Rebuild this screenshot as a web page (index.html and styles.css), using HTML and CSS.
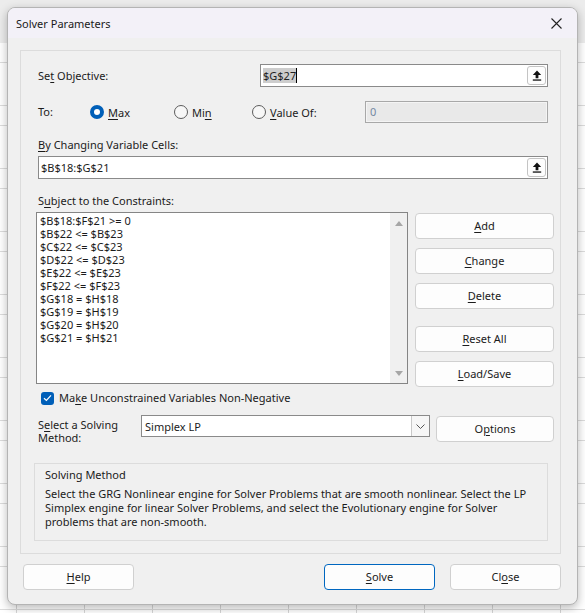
FILE: index.html
```html
<!DOCTYPE html>
<html lang="en">
<head>
  <meta charset="UTF-8">
  <title>Solver Parameters</title>
  <link rel="stylesheet" href="styles.css">
</head>
<body>
  <div class="dialog">
    <div class="titlebar">
      <span class="title">Solver Parameters</span>
      <svg class="close-x" width="11" height="11" viewBox="0 0 11 11">
        <path d="M0.5 0.5 L10.5 10.5 M10.5 0.5 L0.5 10.5" stroke="#222" stroke-width="1.1" fill="none"/>
      </svg>
    </div>

    <div class="content">
      <div class="group">
        <div class="row objective-row">
          <span class="label">Se<u>t</u> Objective:</span>
          <div class="refedit objective">
            <span class="text"><span class="selected">$G$27</span><span class="caret"></span></span>
            <span class="collapse-btn">
              <svg width="10" height="11" viewBox="0 0 10 11"><path d="M5 0.5 L9.2 5 H6.4 V8.2 H3.6 V5 H0.8 Z" fill="#111"/><rect x="0.8" y="9.4" width="8.4" height="1.3" fill="#111"/></svg>
            </span>
          </div>
        </div>

        <div class="row to-row">
          <span class="label to-label">To:</span>
          <label class="radio opt-max"><span class="circle on"></span><span><u>M</u>ax</span></label>
          <label class="radio opt-min"><span class="circle"></span><span>Mi<u>n</u></span></label>
          <label class="radio opt-value"><span class="circle"></span><span><u>V</u>alue Of:</span></label>
          <div class="value-input">0</div>
        </div>

        <div class="label caption by-label"><u>B</u>y Changing Variable Cells:</div>
        <div class="refedit full">
          <span class="text">$B$18:$G$21</span>
          <span class="collapse-btn">
            <svg width="10" height="11" viewBox="0 0 10 11"><path d="M5 0.5 L9.2 5 H6.4 V8.2 H3.6 V5 H0.8 Z" fill="#111"/><rect x="0.8" y="9.4" width="8.4" height="1.3" fill="#111"/></svg>
          </span>
        </div>

        <div class="label caption subj-label">S<u>u</u>bject to the Constraints:</div>
        <div class="constraints">
          <div class="listbox">
            <ul class="items">
              <li>$B$18:$F$21 &gt;= 0</li>
              <li>$B$22 &lt;= $B$23</li>
              <li>$C$22 &lt;= $C$23</li>
              <li>$D$22 &lt;= $D$23</li>
              <li>$E$22 &lt;= $E$23</li>
              <li>$F$22 &lt;= $F$23</li>
              <li>$G$18 = $H$18</li>
              <li>$G$19 = $H$19</li>
              <li>$G$20 = $H$20</li>
              <li>$G$21 = $H$21</li>
            </ul>
            <div class="scrollbar">
              <svg width="8" height="5" viewBox="0 0 8 5"><path d="M4 0 L8 5 H0 Z" fill="#a6a6a6"/></svg>
              <svg width="8" height="5" viewBox="0 0 8 5"><path d="M0 0 H8 L4 5 Z" fill="#a6a6a6"/></svg>
            </div>
          </div>
          <div class="side-buttons">
            <div class="btn"><span><u>A</u>dd</span></div>
            <div class="btn"><span><u>C</u>hange</span></div>
            <div class="btn"><span><u>D</u>elete</span></div>
            <div class="btn spaced"><span><u>R</u>eset All</span></div>
            <div class="btn"><span><u>L</u>oad/Save</span></div>
          </div>
        </div>

        <label class="check-row">
          <span class="checkbox">
            <svg width="9" height="8" viewBox="0 0 9 8"><path d="M1 4.2 L3.4 6.5 L8 1.3" stroke="#fff" stroke-width="1.2" fill="none"/></svg>
          </span>
          <span>Ma<u>k</u>e Unconstrained Variables Non-Negative</span>
        </label>

        <div class="method-row">
          <span class="label method-label">S<u>e</u>lect a Solving<br>Method:</span>
          <div class="select">
            <span class="text">Simplex LP</span>
            <span class="drop">
              <svg width="9" height="5" viewBox="0 0 9 5"><path d="M0.5 0.5 L4.5 4.5 L8.5 0.5" stroke="#555" stroke-width="1" fill="none"/></svg>
            </span>
          </div>
          <div class="btn options"><span>O<u>p</u>tions</span></div>
        </div>

        <div class="info">
          <div class="info-title">Solving Method</div>
          <p class="info-text">Select the GRG Nonlinear engine for Solver Problems that are smooth nonlinear. Select the LP<br>Simplex engine for linear Solver Problems, and select the Evolutionary engine for Solver<br>problems that are non-smooth.</p>
        </div>
      </div>

      <div class="footer">
        <div class="btn foot"><span><u>H</u>elp</span></div>
        <div class="foot-right">
          <div class="btn foot default"><span><u>S</u>olve</span></div>
          <div class="btn foot"><span>Cl<u>o</u>se</span></div>
        </div>
      </div>
    </div>
  </div>
</body>
</html>
```

FILE: styles.css
```css
* {
  box-sizing: border-box;
}
html, body {
  margin: 0;
  height: 100%;
}
body {
  font-family: "Segoe UI", "Noto Sans", sans-serif;
  font-size: 11px;
  color: #1b1b1b;
  background-color: #ffffff;
  background-image:
    linear-gradient(to bottom, #ececec 0, #ececec 43px, transparent 43px),
    repeating-linear-gradient(to bottom, transparent 0, transparent 42px, #dcdcdc 42px, #dcdcdc 43px, transparent 43px, transparent 62px, #dcdcdc 62px, #dcdcdc 63px),
    repeating-linear-gradient(to right, transparent 0, transparent 16px, #d6d6d6 16px, #d6d6d6 17px, transparent 17px, transparent 68px);
  padding: 7px 0 0 7px;
  overflow: hidden;
}
u {
  text-decoration: underline;
  text-underline-offset: 2px;
}
.dialog {
  width: 571px;
  height: 598px;
  background: #f0f0f0;
  border: 1px solid #b4b4b4;
  border-radius: 8px;
  box-shadow: 0 3px 10px rgba(0, 0, 0, 0.28);
  overflow: hidden;
}
.titlebar {
  height: 30px;
  background: #f3f1f8;
  display: flex;
  align-items: center;
  justify-content: space-between;
  padding: 0 15px 0 8px;
}
.title {
  color: #1a1a1a;
}
.close-x {
  margin-top: 1px;
}
.content {
  padding: 12px 0 0 12px;
}
.group {
  width: 541px;
  height: 504px;
  border: 1px solid #dcdcdc;
  padding: 13px 12px 0 17px;
}
.label {
  line-height: 16px;
  white-space: nowrap;
}
.row {
  display: flex;
  align-items: center;
}
.refedit {
  height: 23px;
  background: #fff;
  border: 1px solid #8a8a8a;
  display: flex;
  align-items: center;
  justify-content: space-between;
  padding: 0 1px 0 2px;
}
.refedit .text {
  display: flex;
  align-items: center;
}
.objective {
  width: 288px;
  margin-left: auto;
}
.selected {
  background: #cdcdcd;
  color: #222;
}
.caret {
  display: inline-block;
  width: 1px;
  height: 15px;
  background: #000;
}
.collapse-btn {
  width: 19px;
  height: 19px;
  background: #fdfdfd;
  border: 1px solid #c4c4c4;
  border-radius: 3px;
  display: flex;
  align-items: center;
  justify-content: center;
}
.to-row {
  margin-top: 14px;
  height: 22px;
}
.to-label {
  width: 52px;
}
.radio {
  display: flex;
  align-items: center;
  gap: 4px;
}
.opt-max {
  width: 84px;
}
.opt-min {
  width: 78px;
}
.circle {
  width: 14px;
  height: 14px;
  border-radius: 50%;
  border: 1px solid #5c5c5c;
  background: #f7f7f7;
}
.circle.on {
  border: 4px solid #005fb8;
  background: #fff;
}
.value-input {
  margin-left: auto;
  width: 183px;
  height: 22px;
  border: 1px solid #a8a8a8;
  background: #e9e9e9;
  box-shadow: inset 0 0 0 1px #f4f4f4;
  color: #7488a3;
  padding: 2px 0 0 4px;
  line-height: 16px;
}
.by-label {
  margin-top: 14px;
}
.caption {
  margin-bottom: 3px;
}
.full {
  width: 510px;
}
.subj-label {
  margin-top: 14px;
}
.constraints {
  display: flex;
  align-items: flex-start;
  gap: 7px;
  margin-left: -2px;
  margin-right: -6px;
}
.listbox {
  width: 373px;
  height: 172px;
  background: #fff;
  border: 1px solid #858585;
  display: flex;
  justify-content: space-between;
}
.items {
  list-style: none;
  margin: 0;
  padding: 1px 0 0 3px;
  line-height: 13px;
}
.scrollbar {
  width: 17px;
  background: #f0f0f0;
  display: flex;
  flex-direction: column;
  justify-content: space-between;
  align-items: center;
  padding: 8px 0 7px;
}
.side-buttons {
  display: flex;
  flex-direction: column;
  gap: 9px;
  padding-top: 1px;
}
.btn {
  height: 26px;
  background: #fdfdfd;
  border: 1px solid #d0d0d0;
  border-radius: 4px;
  display: flex;
  align-items: center;
  justify-content: center;
  padding-bottom: 2px;
  color: #1b1b1b;
}
.side-buttons .btn {
  width: 139px;
}
.side-buttons .spaced {
  margin-top: 8px;
}
.check-row {
  display: flex;
  align-items: center;
  gap: 5px;
  margin: 3px 0 0 3px;
  line-height: 16px;
}
.checkbox {
  width: 13px;
  height: 13px;
  border-radius: 3px;
  background: #005fb8;
  display: flex;
  align-items: center;
  justify-content: center;
}
.method-row {
  display: flex;
  align-items: flex-start;
  margin-top: 9px;
  margin-right: -6px;
}
.method-label {
  width: 103px;
  line-height: 13px;
  padding-top: 3px;
}
.select {
  width: 289px;
  height: 22px;
  background: #fff;
  border: 1px solid #8a8a8a;
  display: flex;
  align-items: center;
  justify-content: space-between;
  padding-left: 3px;
}
.drop {
  width: 18px;
  height: 20px;
  background: #f6f6f6;
  border-left: 1px solid #c8c8c8;
  display: flex;
  align-items: center;
  justify-content: center;
}
.options {
  width: 118px;
  margin-left: 6px;
  margin-top: 1px;
}
.info {
  margin: 19px 0 0 -4px;
  width: 514px;
  height: 78px;
  border: 1px solid #dcdcdc;
  padding: 3px 10px 0 10px;
}
.info-title {
  line-height: 16px;
}
.info-text {
  margin: 4px 0 0;
  line-height: 14px;
  white-space: nowrap;
}
.footer {
  display: flex;
  justify-content: space-between;
  margin-top: 10px;
  width: 541px;
  padding-left: 3px;
}
.foot-right {
  display: flex;
  gap: 15px;
}
.foot {
  width: 111px;
}
.default {
  border: 1px solid #0067c0;
}
```
